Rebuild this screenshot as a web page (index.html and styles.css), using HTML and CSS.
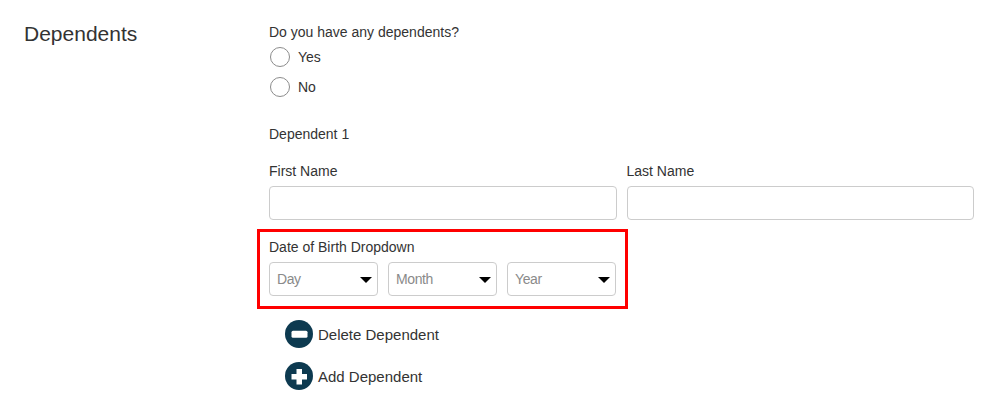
FILE: index.html
```html
<!DOCTYPE html>
<html lang="en">
<head>
<meta charset="utf-8">
<title>Dependents</title>
<link rel="stylesheet" href="styles.css">
</head>
<body>
<main class="page">
  <h2 class="section-title">Dependents</h2>
  <form class="form">
    <p class="question">Do you have any dependents?</p>
    <label class="radio"><span class="radio-mark"></span>Yes</label>
    <label class="radio"><span class="radio-mark"></span>No</label>
    <p class="subhead">Dependent 1</p>
    <div class="name-row">
      <div class="field"><label class="field-label">First Name</label><div class="input"></div></div>
      <div class="field"><label class="field-label">Last Name</label><div class="input"></div></div>
    </div>
    <div class="dob">
      <div class="dob-label">Date of Birth Dropdown</div>
      <div class="dob-row">
        <div class="select">Day<span class="caret"></span></div>
        <div class="select">Month<span class="caret"></span></div>
        <div class="select">Year<span class="caret"></span></div>
      </div>
    </div>
    <div class="action action-delete">
      <svg class="action-icon" viewBox="0 0 28 28" aria-hidden="true"><circle cx="14" cy="14" r="14" fill="#0d3a50"/><rect x="6.5" y="10.7" width="16" height="7" rx="1.5" fill="#fff"/></svg>
      <span class="action-text">Delete Dependent</span>
    </div>
    <div class="action">
      <svg class="action-icon" viewBox="0 0 28 28" aria-hidden="true"><circle cx="14" cy="14" r="14" fill="#0d3a50"/><path d="M11.5 7h5.5v5h5v5.5h-5v5h-5.5v-5h-5v-5.5h5z" fill="#fff"/></svg>
      <span class="action-text">Add Dependent</span>
    </div>
  </form>
</main>
</body>
</html>
```
FILE: styles.css
```css
* { box-sizing: border-box; }
html, body { margin: 0; padding: 0; background: #fff; }
body {
  font-family: "Liberation Sans", Arial, sans-serif;
  font-size: 14px;
  line-height: 20px;
  color: #333;
  overflow: hidden;
}
.page {
  display: flex;
  align-items: flex-start;
  height: 412px;
  padding: 22px 27px 0 24px;
}
.section-title {
  width: 245px;
  flex: none;
  margin: 0;
  font-size: 21px;
  font-weight: 400;
  line-height: 24px;
}
.form { flex: 1; min-width: 0; }
.question { margin: 0; }
.radio {
  display: flex;
  align-items: center;
  gap: 8px;
  height: 30px;
  padding-left: 1px;
}
.radio-mark {
  width: 20px;
  height: 20px;
  border: 1px solid #8c8c8c;
  border-radius: 50%;
}
.subhead { margin: 22px 0 0; }
.name-row {
  display: flex;
  gap: 10px;
  margin-top: 17px;
}
.field { flex: 1; min-width: 0; }
.field-label { display: block; margin-bottom: 5px; }
.input {
  height: 34px;
  border: 1px solid #ccc;
  border-radius: 4px;
  background: #fff;
}
.dob {
  width: 371px;
  height: 80px;
  margin: 9px 0 0 -12px;
  padding: 5px 9px 0;
  border: 3px solid #f00;
}
.dob-label { margin-bottom: 5px; }
.dob-row { display: flex; gap: 10px; }
.select {
  position: relative;
  width: 109px;
  height: 34px;
  padding: 0 7px;
  border: 1px solid #ccc;
  border-radius: 4px;
  color: #8a8a8a;
  letter-spacing: -0.4px;
  line-height: 33px;
}
.caret {
  position: absolute;
  right: 5px;
  top: 14px;
  width: 0;
  height: 0;
  border-left: 6px solid transparent;
  border-right: 6px solid transparent;
  border-top: 6px solid #000;
}
.action {
  display: flex;
  align-items: center;
  gap: 5px;
  height: 28px;
  margin: 14px 0 0 16px;
  font-size: 15px;
}
.action-delete { margin-top: 11px; }
.action-icon { width: 28px; height: 28px; flex: none; }
.action-text { margin-top: 2px; }
```
